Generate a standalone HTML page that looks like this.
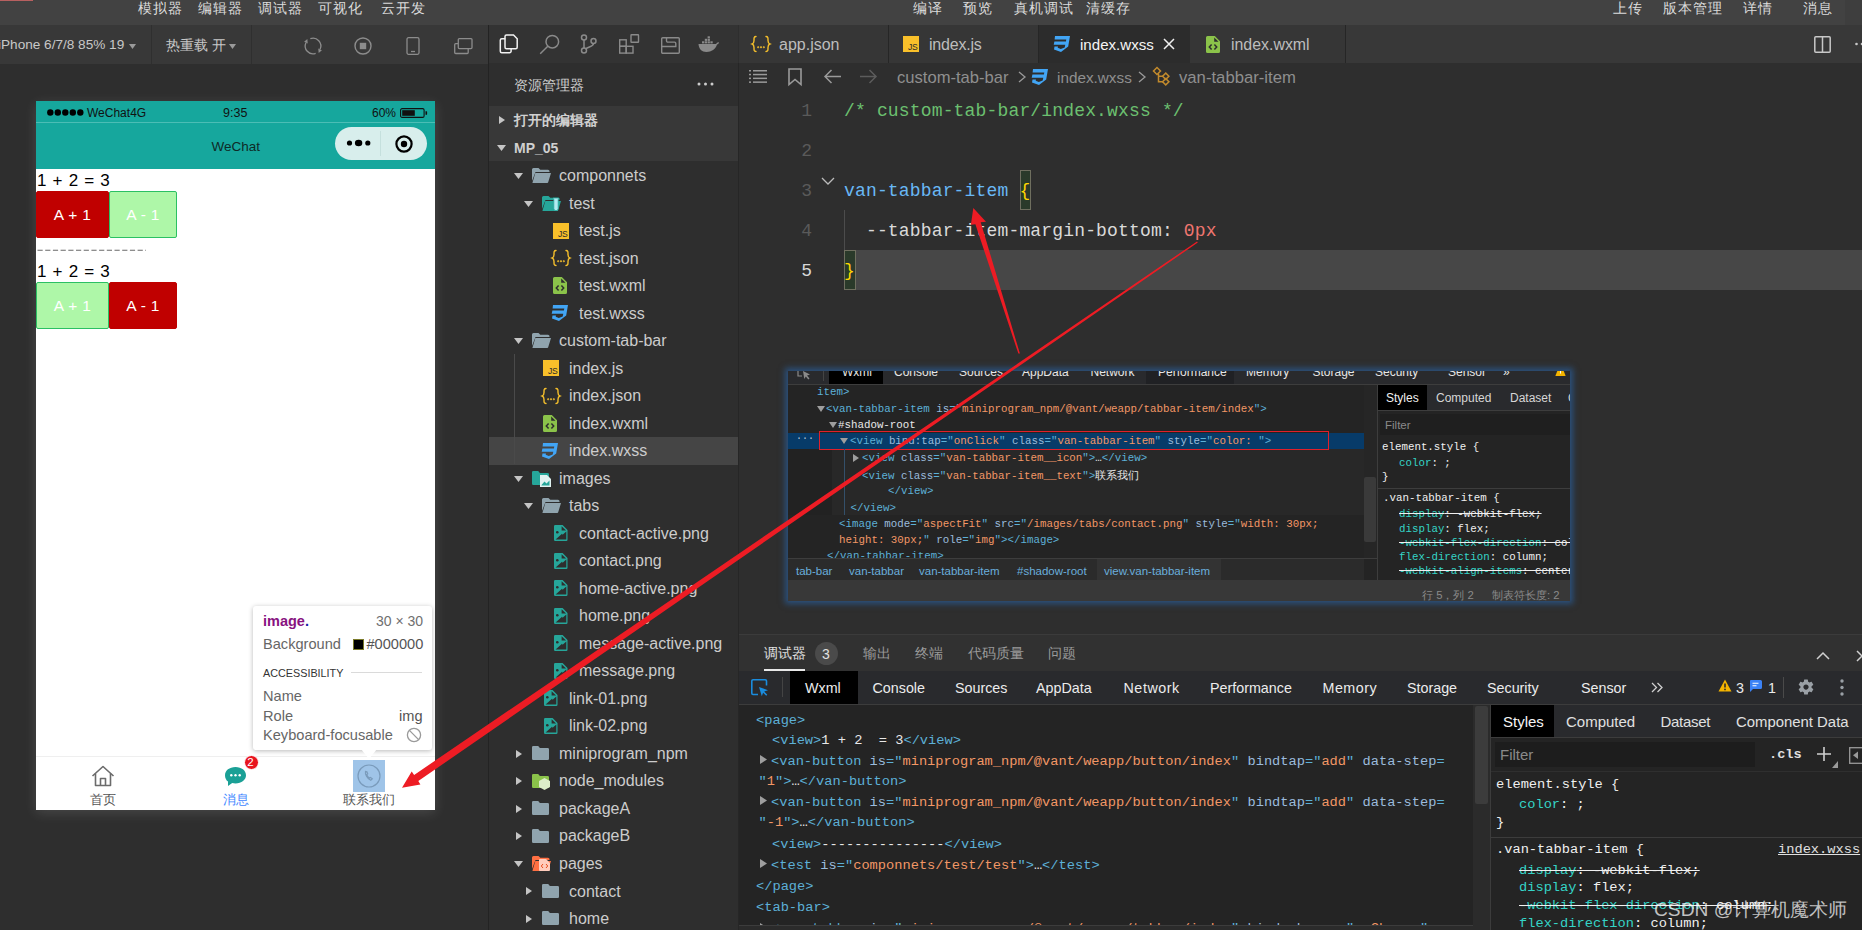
<!DOCTYPE html><html><head><meta charset="utf-8"><title>devtools</title><style>
*{margin:0;padding:0;box-sizing:border-box}
html,body{width:1862px;height:930px;overflow:hidden;background:#2e2e2e;font-family:"Liberation Sans",sans-serif;position:relative}
.a{position:absolute;white-space:nowrap}
svg.a{overflow:visible}
.m{font-family:"Liberation Mono",monospace}
.tg{color:#5db0d7}.an{color:#9bbbdc}.av{color:#f29766}.tx{color:#e8e8e8}.pn{color:#35d4c7}.pv{color:#f0f0f0}
.st{text-decoration:line-through;color:#f0f0f0}
</style></head><body>
<div class="a" style="left:0px;top:0px;width:1862px;height:25px;background:#424242;"></div>
<div class="a" style="left:0px;top:0px;width:33px;height:1px;background:#b86060;"></div>
<div class="a" style="left:1845px;top:0px;width:17px;height:25px;background:#3e3e3e;"></div>
<div class="a" style="left:138px;top:-1.50px;font-size:14px;line-height:18px;color:#dcdcdc;letter-spacing:1px;">模拟器</div>
<div class="a" style="left:198px;top:-1.50px;font-size:14px;line-height:18px;color:#dcdcdc;letter-spacing:1px;">编辑器</div>
<div class="a" style="left:258px;top:-1.50px;font-size:14px;line-height:18px;color:#dcdcdc;letter-spacing:1px;">调试器</div>
<div class="a" style="left:318px;top:-1.50px;font-size:14px;line-height:18px;color:#dcdcdc;letter-spacing:1px;">可视化</div>
<div class="a" style="left:381px;top:-1.50px;font-size:14px;line-height:18px;color:#dcdcdc;letter-spacing:1px;">云开发</div>
<div class="a" style="left:913px;top:-1.50px;font-size:14px;line-height:18px;color:#dcdcdc;letter-spacing:1px;">编译</div>
<div class="a" style="left:963px;top:-1.50px;font-size:14px;line-height:18px;color:#dcdcdc;letter-spacing:1px;">预览</div>
<div class="a" style="left:1014px;top:-1.50px;font-size:14px;line-height:18px;color:#dcdcdc;letter-spacing:1px;">真机调试</div>
<div class="a" style="left:1086px;top:-1.50px;font-size:14px;line-height:18px;color:#dcdcdc;letter-spacing:1px;">清缓存</div>
<div class="a" style="left:1613px;top:-1.50px;font-size:14px;line-height:18px;color:#dcdcdc;letter-spacing:1px;">上传</div>
<div class="a" style="left:1663px;top:-1.50px;font-size:14px;line-height:18px;color:#dcdcdc;letter-spacing:1px;">版本管理</div>
<div class="a" style="left:1743px;top:-1.50px;font-size:14px;line-height:18px;color:#dcdcdc;letter-spacing:1px;">详情</div>
<div class="a" style="left:1803px;top:-1.50px;font-size:14px;line-height:18px;color:#dcdcdc;letter-spacing:1px;">消息</div>
<div class="a" style="left:0px;top:25px;width:488px;height:39px;background:#383838;"></div>
<div class="a" style="left:151px;top:25px;width:1px;height:39px;background:#2f2f2f;"></div>
<div class="a" style="left:251px;top:25px;width:1px;height:39px;background:#2f2f2f;"></div>
<div class="a" style="left:-2px;top:36.00px;font-size:13.6px;line-height:18px;color:#c8c8c8;">iPhone 6/7/8 85% 19</div>
<svg class="a" style="left:129px;top:44px" width="7" height="5"><path d="M0 0H7L3.5 5Z" fill="#9a9a9a"/></svg>
<div class="a" style="left:166px;top:36.00px;font-size:14px;line-height:18px;color:#c8c8c8;">热重载 开</div>
<svg class="a" style="left:229px;top:44px" width="7" height="5"><path d="M0 0H7L3.5 5Z" fill="#9a9a9a"/></svg>
<svg class="a" style="left:304px;top:37px" width="18" height="18" viewBox="0 0 18 18"><path d="M6.33 1.67A7.8 7.8 0 0 1 16.07 12.3M11.67 16.33A7.8 7.8 0 0 1 1.93 5.7" fill="none" stroke="#8c8c8c" stroke-width="1.3"/><path d="M14.25 11.46L17.9 13.14L14.68 15.9Z M0.12 4.85L3.74 6.55L3.33 2.1Z" fill="#8c8c8c"/></svg>
<svg class="a" style="left:354px;top:37px" width="18" height="18" viewBox="0 0 18 18"><circle cx="9" cy="9" r="8" fill="none" stroke="#8c8c8c" stroke-width="1.4"/><rect x="5.8" y="5.8" width="6.4" height="6.4" fill="#8c8c8c"/></svg>
<svg class="a" style="left:406px;top:37px" width="14" height="18" viewBox="0 0 14 18" fill="none" stroke="#8c8c8c" stroke-width="1.3"><rect x="1" y="0.7" width="12" height="16.6" rx="1.5"/><path d="M5 14.5H9"/></svg>
<svg class="a" style="left:454px;top:38px" width="19" height="17" viewBox="0 0 19 17" fill="none" stroke="#8c8c8c" stroke-width="1.3"><rect x="4.3" y="0.6" width="13.7" height="10" rx="1"/><path d="M4.3 5.7H1.7A1 1 0 0 0 .7 6.7V14.5A1 1 0 0 0 1.7 15.5H13.2A1 1 0 0 0 14.2 14.5V10.6"/></svg>
<div class="a" style="left:0px;top:64px;width:488px;height:866px;background:#2e2e2e;"></div>
<div class="a" style="left:488px;top:25px;width:1px;height:905px;background:#232323;"></div>
<div class="a" style="left:36px;top:101px;width:399px;height:709px;background:#fff;box-shadow:0 3px 12px rgba(255,255,255,.13);"></div>
<div class="a" style="left:36px;top:101px;width:399px;height:68px;background:#16a79d;"></div>
<div class="a" style="left:36px;top:122px;width:399px;height:1px;background:#4cbdb5;"></div>
<svg class="a" style="left:47px;top:109px" width="37" height="7" viewBox="0 0 37 7"><circle cx="3.3" cy="3.5" r="3.2"/><circle cx="10.8" cy="3.5" r="3.2"/><circle cx="18.3" cy="3.5" r="3.2"/><circle cx="25.8" cy="3.5" r="3.2"/><circle cx="33.3" cy="3.5" r="3.2"/></svg>
<div class="a" style="left:87px;top:105.50px;font-size:12px;line-height:14px;color:#111;">WeChat4G</div>
<div class="a" style="left:223px;top:106.00px;font-size:12.5px;line-height:14px;color:#111;">9:35</div>
<div class="a" style="left:372px;top:106.00px;font-size:12px;line-height:14px;color:#111;">60%</div>
<svg class="a" style="left:400px;top:108px" width="28" height="10" viewBox="0 0 28 10"><rect x="0.6" y="0.6" width="23.5" height="8.8" rx="1.5" fill="none" stroke="#111" stroke-width="1.1"/><rect x="2.2" y="2.2" width="12.6" height="5.6" fill="#111"/><path d="M25.5 3.2h1a.6 .6 0 0 1 .6.6v2.4a.6 .6 0 0 1-.6.6h-1z" fill="#111"/></svg>
<div class="a" style="left:211.5px;top:139.00px;font-size:13.5px;line-height:16px;color:#0e2b28;">WeChat</div>
<div class="a" style="left:335px;top:127px;width:92px;height:33px;background:#d8eeec;border-radius:17px;"></div>
<div class="a" style="left:380px;top:131px;width:1px;height:25px;background:#c5e0dd;"></div>
<svg class="a" style="left:346px;top:138px" width="26" height="10" viewBox="0 0 26 10"><circle cx="3.5" cy="5" r="2.6" fill="#000"/><ellipse cx="12.6" cy="5" rx="3.7" ry="3.3" fill="#000"/><circle cx="21.8" cy="5" r="2.6" fill="#000"/></svg>
<svg class="a" style="left:394px;top:134px" width="20" height="20" viewBox="0 0 20 20"><circle cx="10" cy="10" r="7.6" fill="none" stroke="#000" stroke-width="2.2"/><circle cx="10" cy="10" r="3.2" fill="#000"/></svg>
<div class="a" style="left:37px;top:171.00px;font-size:17px;line-height:20px;color:#000;letter-spacing:0.2px;word-spacing:1px;">1 + 2 = 3</div>
<div class="a" style="left:36px;top:191px;width:73px;height:47px;background:#c00000;border:1px solid #c00000;border-radius:2px;color:#fff;font-size:15.5px;line-height:45px;text-align:center;letter-spacing:0.3px">A + 1</div>
<div class="a" style="left:109px;top:191px;width:68px;height:47px;background:#aef7a8;border:1px solid #2bc063;border-radius:2px;color:#fff;font-size:15.5px;line-height:45px;text-align:center;letter-spacing:0.3px">A - 1</div>
<svg class="a" style="left:37px;top:249px" width="110" height="3"><path d="M0.5 1.2H109" stroke="#6a6a6a" stroke-width="1.1" stroke-dasharray="5.2 2.5"/></svg>
<div class="a" style="left:37px;top:262.00px;font-size:17px;line-height:20px;color:#000;letter-spacing:0.2px;word-spacing:1px;">1 + 2 = 3</div>
<div class="a" style="left:36px;top:282px;width:73px;height:47px;background:#aef7a8;border:1px solid #2bc063;border-radius:2px;color:#fff;font-size:15.5px;line-height:45px;text-align:center;letter-spacing:0.3px">A + 1</div>
<div class="a" style="left:109px;top:282px;width:68px;height:47px;background:#c00000;border:1px solid #c00000;border-radius:2px;color:#fff;font-size:15.5px;line-height:45px;text-align:center;letter-spacing:0.3px">A - 1</div>
<div class="a" style="left:36px;top:756px;width:399px;height:1px;background:#efefef;"></div>
<svg class="a" style="left:91px;top:765px" width="24" height="22" viewBox="0 0 24 22" fill="none" stroke="#6b6b6b" stroke-width="1.6" stroke-linejoin="round"><path d="M1.5 11L12 1.5L22.5 11"/><path d="M4.5 8.5V20.5H19.5V8.5"/><path d="M9.5 20.5V13.5H14.5V20.5"/></svg>
<div class="a" style="left:89.5px;top:792.50px;font-size:12.5px;line-height:15px;color:#555;">首页</div>
<svg class="a" style="left:224px;top:766px" width="23" height="21" viewBox="0 0 23 21"><path d="M11.5 1C17.6 1 22 4.6 22 9.2S17.6 17.4 11.5 17.4c-1.2 0-2.3-.1-3.3-.4L4 20V15.6C2 14.1 1 11.8 1 9.2 1 4.6 5.4 1 11.5 1Z" fill="#1aa096"/><circle cx="7.3" cy="9.2" r="1.2" fill="#fff"/><circle cx="11.5" cy="9.2" r="1.2" fill="#fff"/><circle cx="15.7" cy="9.2" r="1.2" fill="#fff"/></svg>
<div class="a" style="left:243.5px;top:754.5px;width:15.5px;height:15.5px;background:#e8141e;border-radius:50%;border:1.2px solid #fff;"></div>
<div class="a" style="left:247.3px;top:755.70px;font-size:11.5px;line-height:13px;color:#fff;">2</div>
<div class="a" style="left:222.5px;top:792.50px;font-size:12.5px;line-height:15px;color:#3f87ff;">消息</div>
<div class="a" style="left:353px;top:760px;width:32px;height:32px;background:#9fc4e8;"></div>
<svg class="a" style="left:356px;top:763px" width="26" height="26" viewBox="0 0 26 26" fill="none" stroke="#7a9bbb" stroke-width="1.2"><circle cx="13" cy="13" r="11"/><path d="M9.5 8.5c-.6 2.5 1.6 7.3 5.2 8.8l1.6-1.6-1.8-1.3-1 .7c-1-.6-2.4-2.3-2.7-3.5l.9-.8-.8-2z"/></svg>
<div class="a" style="left:343px;top:792.50px;font-size:12.5px;line-height:15px;color:#555;">联系我们</div>
<div class="a" style="left:253px;top:606px;width:179px;height:144px;background:#fff;border-radius:3px;box-shadow:0 1px 5px rgba(0,0,0,.28);"></div>
<svg class="a" style="left:361px;top:749px" width="16" height="10"><path d="M0 0H16L8 10Z" fill="#fff"/></svg>
<div class="a" style="left:263px;top:612.00px;font-size:14.5px;line-height:18px;color:#881280;font-weight:bold;"><span>image</span><span style="color:#1a1aa6">.</span></div>
<div class="a" style="left:376px;top:612.00px;font-size:14px;line-height:18px;color:#707070;">30 × 30</div>
<div class="a" style="left:263px;top:635.00px;font-size:14.6px;line-height:18px;color:#666;">Background</div>
<div class="a" style="left:353px;top:639px;width:11px;height:11px;background:#000;border:1px solid #7b7b2a;"></div>
<div class="a" style="left:366.5px;top:635.00px;font-size:14.6px;line-height:18px;color:#555;">#000000</div>
<div class="a" style="left:263px;top:665.50px;font-size:10.8px;line-height:14px;color:#333;">ACCESSIBILITY</div>
<div class="a" style="left:351px;top:672px;width:71px;height:1px;background:#dadada;"></div>
<div class="a" style="left:263px;top:687.00px;font-size:14.6px;line-height:18px;color:#666;">Name</div>
<div class="a" style="left:263px;top:706.50px;font-size:14.6px;line-height:18px;color:#666;">Role</div>
<div class="a" style="left:399px;top:706.50px;font-size:14.6px;line-height:18px;color:#555;">img</div>
<div class="a" style="left:263px;top:726.00px;font-size:14.6px;line-height:18px;color:#666;">Keyboard-focusable</div>
<svg class="a" style="left:406px;top:727px" width="16" height="16" viewBox="0 0 16 16" fill="none" stroke="#9a9a9a" stroke-width="1.3"><circle cx="8" cy="8" r="6.6"/><path d="M3.4 3.4L12.6 12.6"/></svg>
<div class="a" style="left:489px;top:25px;width:249px;height:38px;background:#333333;"></div>
<div class="a" style="left:738px;top:63px;width:1px;height:867px;background:#262626;"></div>
<svg class="a" style="left:499px;top:34px" width="20" height="20" viewBox="0 0 20 20" fill="none" stroke="#f2f2f2" stroke-width="1.5"><path d="M6.2 4.8H2.8A1.5 1.5 0 0 0 1.3 6.3V17.2a1.5 1.5 0 0 0 1.5 1.5H10.6a1.5 1.5 0 0 0 1.5-1.5V14.8"/><path d="M7.5 1H14.5L18.2 4.7V13.3A1.5 1.5 0 0 1 16.7 14.8H7.5A1.5 1.5 0 0 1 6 13.3V2.5A1.5 1.5 0 0 1 7.5 1Z"/></svg>
<svg class="a" style="left:539px;top:34px" width="21" height="21" viewBox="0 0 21 21" fill="none" stroke="#8a8a8a" stroke-width="1.5"><circle cx="13.3" cy="7.7" r="6.3"/><path d="M8.8 12.2L1.2 19.8"/></svg>
<svg class="a" style="left:580px;top:34px" width="18" height="20" viewBox="0 0 18 20" fill="none" stroke="#8a8a8a" stroke-width="1.5"><circle cx="4" cy="3.5" r="2.5"/><circle cx="4" cy="16.5" r="2.5"/><circle cx="13.5" cy="7" r="2.5"/><path d="M4 6V14M13.5 9.5C13.5 12.5 9.5 12.5 5.5 14.8"/></svg>
<svg class="a" style="left:619px;top:34px" width="21" height="20" viewBox="0 0 21 20" fill="none" stroke="#8a8a8a" stroke-width="1.4"><rect x="0.7" y="5.8" width="6.5" height="6.5"/><rect x="0.7" y="12.3" width="6.5" height="6.8"/><rect x="7.2" y="12.3" width="6.8" height="6.8"/><rect x="12" y="0.7" width="7.5" height="7.5" rx="0.5"/></svg>
<svg class="a" style="left:661px;top:37px" width="19" height="17" viewBox="0 0 19 17" fill="none" stroke="#8a8a8a" stroke-width="1.4"><rect x="0.7" y="0.7" width="17.6" height="15.6" rx="1"/><path d="M5.5 0.7V3.8A1.3 1.3 0 0 0 6.8 5.1H13.5A1.3 1.3 0 0 1 14.8 6.4V9.5H0.7"/></svg>
<svg class="a" style="left:698px;top:37px" width="22" height="15" viewBox="0 0 22 15"><path d="M0.5 7H18.2C18.5 6 19.5 5.2 21 5.4C20.6 6.6 20 7.2 19 7.6C17.5 12.5 13.5 15 8.5 15C3.8 15 0.8 12 0.5 7Z" fill="#8a8a8a"/><rect x="4" y="4.3" width="2.3" height="2.1" fill="#8a8a8a"/><rect x="6.8" y="4.3" width="2.3" height="2.1" fill="#8a8a8a"/><rect x="9.6" y="4.3" width="2.3" height="2.1" fill="#8a8a8a"/><rect x="12.4" y="4.3" width="2.3" height="2.1" fill="#8a8a8a"/><rect x="6.8" y="1.8" width="2.3" height="2.1" fill="#8a8a8a"/><rect x="9.6" y="1.8" width="2.3" height="2.1" fill="#8a8a8a"/><rect x="9.6" y="-0.7" width="2.3" height="2.1" fill="#8a8a8a"/></svg>
<div class="a" style="left:514px;top:75.50px;font-size:14px;line-height:18px;color:#cfcfcf;">资源管理器</div>
<svg class="a" style="left:697px;top:82px" width="17" height="4"><circle cx="2" cy="2" r="1.5" fill="#ccc"/><circle cx="8.5" cy="2" r="1.5" fill="#ccc"/><circle cx="15" cy="2" r="1.5" fill="#ccc"/></svg>
<div class="a" style="left:489px;top:106px;width:249px;height:55px;background:#383838;"></div>
<svg class="a" style="left:499px;top:116.0px" width="6" height="8"><path d="M0 0L6 4L0 8Z" fill="#c5c5c5"/></svg>
<div class="a" style="left:514px;top:111.00px;font-size:14px;line-height:18px;color:#d0d0d0;font-weight:bold;">打开的编辑器</div>
<svg class="a" style="left:497px;top:144.5px" width="9" height="6"><path d="M0 0H9L4.5 6Z" fill="#c5c5c5"/></svg>
<div class="a" style="left:514px;top:138.50px;font-size:14px;line-height:18px;color:#d0d0d0;font-weight:bold;">MP_05</div>
<div class="a" style="left:489px;top:437px;width:249px;height:27.5px;background:#454545;"></div>
<div class="a" style="left:514px;top:354px;width:1px;height:110px;background:#4a4a4a;"></div>
<svg class="a" style="left:514px;top:173.0px" width="9" height="6"><path d="M0 0H9L4.5 6Z" fill="#c5c5c5"/></svg>
<svg class="a" style="left:532px;top:168.0px" width="19" height="15" viewBox="0 0 19 15"><path d="M0 1.5A1.5 1.5 0 0 1 1.5 0H6.5L8.3 1.8H16A1.5 1.5 0 0 1 17.5 3.3V4H3.5L0 13Z" fill="#90a4ae"/><path d="M3.3 5H19L16.2 14.2A1 1 0 0 1 15.2 15H0.4Z" fill="#90a4ae"/></svg>
<div class="a" style="left:559px;top:166.31px;font-size:16px;line-height:20px;color:#cccccc;">componnets</div>
<svg class="a" style="left:524px;top:200.5px" width="9" height="6"><path d="M0 0H9L4.5 6Z" fill="#c5c5c5"/></svg>
<svg class="a" style="left:542px;top:195.5px" width="19" height="15" viewBox="0 0 19 15"><path d="M0 1.5A1.5 1.5 0 0 1 1.5 0H6.5L8.3 1.8H16A1.5 1.5 0 0 1 17.5 3.3V4H3.5L0 13Z" fill="#26a69a"/><path d="M3.3 5H19L16.2 14.2A1 1 0 0 1 15.2 15H0.4Z" fill="#26a69a"/></svg>
<svg class="a" style="left:552px;top:198.0px" width="8" height="13"><path d="M1 0H7V1.2H6.2V10.5A2.2 2.2 0 0 1 1.8 10.5V1.2H1Z" fill="#b2ebf2" stroke="#26a69a" stroke-width=".8"/></svg>
<div class="a" style="left:569px;top:193.82px;font-size:16px;line-height:20px;color:#cccccc;">test</div>
<svg class="a" style="left:553px;top:222.5px" width="16" height="16" viewBox="0 0 16 16"><rect x="0" y="0" width="16" height="16" fill="#f9c02a"/><text x="14.6" y="14.3" text-anchor="end" font-family="Liberation Sans" font-size="8.6" fill="#2b2b2b" letter-spacing="-.2">JS</text></svg>
<div class="a" style="left:579px;top:221.33px;font-size:16px;line-height:20px;color:#cccccc;">test.js</div>
<svg class="a" style="left:551px;top:249.03499999999997px" width="20" height="18" viewBox="0 0 20 18" fill="none" stroke="#f6c02c" stroke-width="1.4" stroke-linecap="round"><path d="M5 1.5C2.8 1.5 3 3 3 5.5S2.6 8.5 1.2 9C2.6 9.5 3 10 3 12.5S2.8 16.5 5 16.5"/><path d="M15 1.5C17.2 1.5 17 3 17 5.5S17.4 8.5 18.8 9C17.4 9.5 17 10 17 12.5S17.2 16.5 15 16.5"/><circle cx="7.2" cy="12.3" r=".35" fill="#f6c02c"/><circle cx="10" cy="12.3" r=".35" fill="#f6c02c"/><circle cx="12.8" cy="12.3" r=".35" fill="#f6c02c"/></svg>
<div class="a" style="left:579px;top:248.83px;font-size:16px;line-height:20px;color:#cccccc;">test.json</div>
<svg class="a" style="left:553px;top:277.2px" width="14" height="17" viewBox="0 0 14 17"><path d="M1.5 0H8.8L14 5.3V15.5A1.5 1.5 0 0 1 12.5 17H1.5A1.5 1.5 0 0 1 0 15.5V1.5A1.5 1.5 0 0 1 1.5 0Z" fill="#8bc34a"/><path d="M8.2 1.5V5.8H12.5Z" fill="#2e2e2e"/><path d="M5.6 8.6L3.3 11.1L5.6 13.6M8.4 8.6L10.7 11.1L8.4 13.6" fill="none" stroke="#2e2e2e" stroke-width="1.5"/></svg>
<div class="a" style="left:579px;top:276.34px;font-size:16px;line-height:20px;color:#cccccc;">test.wxml</div>
<svg class="a" style="left:551px;top:305.0px" width="17" height="16" viewBox="0 0 17 16"><path d="M2 0H17L15.2 10.6L8 16L1 13.6L1.5 10.5H5L4.7 11.8L7.8 12.9L11.7 11.6L12.3 8.8H0.7L1.4 5.6H12.9L13.3 3.5H1.6Z" fill="#42a5f5"/></svg>
<div class="a" style="left:579px;top:303.85px;font-size:16px;line-height:20px;color:#cccccc;">test.wxss</div>
<svg class="a" style="left:514px;top:338.1px" width="9" height="6"><path d="M0 0H9L4.5 6Z" fill="#c5c5c5"/></svg>
<svg class="a" style="left:532px;top:333.1px" width="19" height="15" viewBox="0 0 19 15"><path d="M0 1.5A1.5 1.5 0 0 1 1.5 0H6.5L8.3 1.8H16A1.5 1.5 0 0 1 17.5 3.3V4H3.5L0 13Z" fill="#90a4ae"/><path d="M3.3 5H19L16.2 14.2A1 1 0 0 1 15.2 15H0.4Z" fill="#90a4ae"/></svg>
<div class="a" style="left:559px;top:331.36px;font-size:16px;line-height:20px;color:#cccccc;">custom-tab-bar</div>
<svg class="a" style="left:543px;top:360.1px" width="16" height="16" viewBox="0 0 16 16"><rect x="0" y="0" width="16" height="16" fill="#f9c02a"/><text x="14.6" y="14.3" text-anchor="end" font-family="Liberation Sans" font-size="8.6" fill="#2b2b2b" letter-spacing="-.2">JS</text></svg>
<div class="a" style="left:569px;top:358.86px;font-size:16px;line-height:20px;color:#cccccc;">index.js</div>
<svg class="a" style="left:541px;top:386.57px" width="20" height="18" viewBox="0 0 20 18" fill="none" stroke="#f6c02c" stroke-width="1.4" stroke-linecap="round"><path d="M5 1.5C2.8 1.5 3 3 3 5.5S2.6 8.5 1.2 9C2.6 9.5 3 10 3 12.5S2.8 16.5 5 16.5"/><path d="M15 1.5C17.2 1.5 17 3 17 5.5S17.4 8.5 18.8 9C17.4 9.5 17 10 17 12.5S17.2 16.5 15 16.5"/><circle cx="7.2" cy="12.3" r=".35" fill="#f6c02c"/><circle cx="10" cy="12.3" r=".35" fill="#f6c02c"/><circle cx="12.8" cy="12.3" r=".35" fill="#f6c02c"/></svg>
<div class="a" style="left:569px;top:386.37px;font-size:16px;line-height:20px;color:#cccccc;">index.json</div>
<svg class="a" style="left:543px;top:414.8px" width="14" height="17" viewBox="0 0 14 17"><path d="M1.5 0H8.8L14 5.3V15.5A1.5 1.5 0 0 1 12.5 17H1.5A1.5 1.5 0 0 1 0 15.5V1.5A1.5 1.5 0 0 1 1.5 0Z" fill="#8bc34a"/><path d="M8.2 1.5V5.8H12.5Z" fill="#2e2e2e"/><path d="M5.6 8.6L3.3 11.1L5.6 13.6M8.4 8.6L10.7 11.1L8.4 13.6" fill="none" stroke="#2e2e2e" stroke-width="1.5"/></svg>
<div class="a" style="left:569px;top:413.88px;font-size:16px;line-height:20px;color:#cccccc;">index.wxml</div>
<svg class="a" style="left:541px;top:442.6px" width="17" height="16" viewBox="0 0 17 16"><path d="M2 0H17L15.2 10.6L8 16L1 13.6L1.5 10.5H5L4.7 11.8L7.8 12.9L11.7 11.6L12.3 8.8H0.7L1.4 5.6H12.9L13.3 3.5H1.6Z" fill="#42a5f5"/></svg>
<div class="a" style="left:569px;top:441.38px;font-size:16px;line-height:20px;color:#cccccc;">index.wxss</div>
<svg class="a" style="left:514px;top:475.6px" width="9" height="6"><path d="M0 0H9L4.5 6Z" fill="#c5c5c5"/></svg>
<svg class="a" style="left:532px;top:471.1px" width="17" height="14" viewBox="0 0 17 14"><path d="M0 1.3A1.3 1.3 0 0 1 1.3 0H6.2L7.9 1.9H15.7A1.3 1.3 0 0 1 17 3.2V12.7A1.3 1.3 0 0 1 15.7 14H1.3A1.3 1.3 0 0 1 0 12.7Z" fill="#26a69a"/></svg>
<svg class="a" style="left:540px;top:475.1px" width="11" height="12"><path d="M0 0H7L11 4V12H0Z" fill="#e0f2f1"/><path d="M1.5 10L4.5 6.5L6.5 8.5L9.5 5.5V10.5H1.5Z" fill="#26a69a"/></svg>
<div class="a" style="left:559px;top:468.89px;font-size:16px;line-height:20px;color:#cccccc;">images</div>
<svg class="a" style="left:524px;top:503.1px" width="9" height="6"><path d="M0 0H9L4.5 6Z" fill="#c5c5c5"/></svg>
<svg class="a" style="left:542px;top:498.1px" width="19" height="15" viewBox="0 0 19 15"><path d="M0 1.5A1.5 1.5 0 0 1 1.5 0H6.5L8.3 1.8H16A1.5 1.5 0 0 1 17.5 3.3V4H3.5L0 13Z" fill="#90a4ae"/><path d="M3.3 5H19L16.2 14.2A1 1 0 0 1 15.2 15H0.4Z" fill="#90a4ae"/></svg>
<div class="a" style="left:569px;top:496.40px;font-size:16px;line-height:20px;color:#cccccc;">tabs</div>
<svg class="a" style="left:554px;top:525.1px" width="14" height="16" viewBox="0 0 14 16"><path d="M1.2 0H8.6L13.5 5V14.8A1.2 1.2 0 0 1 12.3 16H1.2A1.2 1.2 0 0 1 0 14.8V1.2A1.2 1.2 0 0 1 1.2 0Z" fill="#26a69a"/><path d="M7.6 1.2V5.6H12.1Z" fill="#2e2e2e"/><circle cx="3.3" cy="7.3" r="1.3" fill="#2e2e2e"/><path d="M1.6 14.6L8 8.8L8.6 9.8L12.3 6.6V14.6Z" fill="#2e2e2e"/></svg>
<div class="a" style="left:579px;top:523.90px;font-size:16px;line-height:20px;color:#cccccc;">contact-active.png</div>
<svg class="a" style="left:554px;top:552.6px" width="14" height="16" viewBox="0 0 14 16"><path d="M1.2 0H8.6L13.5 5V14.8A1.2 1.2 0 0 1 12.3 16H1.2A1.2 1.2 0 0 1 0 14.8V1.2A1.2 1.2 0 0 1 1.2 0Z" fill="#26a69a"/><path d="M7.6 1.2V5.6H12.1Z" fill="#2e2e2e"/><circle cx="3.3" cy="7.3" r="1.3" fill="#2e2e2e"/><path d="M1.6 14.6L8 8.8L8.6 9.8L12.3 6.6V14.6Z" fill="#2e2e2e"/></svg>
<div class="a" style="left:579px;top:551.41px;font-size:16px;line-height:20px;color:#cccccc;">contact.png</div>
<svg class="a" style="left:554px;top:580.1px" width="14" height="16" viewBox="0 0 14 16"><path d="M1.2 0H8.6L13.5 5V14.8A1.2 1.2 0 0 1 12.3 16H1.2A1.2 1.2 0 0 1 0 14.8V1.2A1.2 1.2 0 0 1 1.2 0Z" fill="#26a69a"/><path d="M7.6 1.2V5.6H12.1Z" fill="#2e2e2e"/><circle cx="3.3" cy="7.3" r="1.3" fill="#2e2e2e"/><path d="M1.6 14.6L8 8.8L8.6 9.8L12.3 6.6V14.6Z" fill="#2e2e2e"/></svg>
<div class="a" style="left:579px;top:578.92px;font-size:16px;line-height:20px;color:#cccccc;">home-active.png</div>
<svg class="a" style="left:554px;top:607.6px" width="14" height="16" viewBox="0 0 14 16"><path d="M1.2 0H8.6L13.5 5V14.8A1.2 1.2 0 0 1 12.3 16H1.2A1.2 1.2 0 0 1 0 14.8V1.2A1.2 1.2 0 0 1 1.2 0Z" fill="#26a69a"/><path d="M7.6 1.2V5.6H12.1Z" fill="#2e2e2e"/><circle cx="3.3" cy="7.3" r="1.3" fill="#2e2e2e"/><path d="M1.6 14.6L8 8.8L8.6 9.8L12.3 6.6V14.6Z" fill="#2e2e2e"/></svg>
<div class="a" style="left:579px;top:606.43px;font-size:16px;line-height:20px;color:#cccccc;">home.png</div>
<svg class="a" style="left:554px;top:635.1px" width="14" height="16" viewBox="0 0 14 16"><path d="M1.2 0H8.6L13.5 5V14.8A1.2 1.2 0 0 1 12.3 16H1.2A1.2 1.2 0 0 1 0 14.8V1.2A1.2 1.2 0 0 1 1.2 0Z" fill="#26a69a"/><path d="M7.6 1.2V5.6H12.1Z" fill="#2e2e2e"/><circle cx="3.3" cy="7.3" r="1.3" fill="#2e2e2e"/><path d="M1.6 14.6L8 8.8L8.6 9.8L12.3 6.6V14.6Z" fill="#2e2e2e"/></svg>
<div class="a" style="left:579px;top:633.93px;font-size:16px;line-height:20px;color:#cccccc;">message-active.png</div>
<svg class="a" style="left:554px;top:662.6px" width="14" height="16" viewBox="0 0 14 16"><path d="M1.2 0H8.6L13.5 5V14.8A1.2 1.2 0 0 1 12.3 16H1.2A1.2 1.2 0 0 1 0 14.8V1.2A1.2 1.2 0 0 1 1.2 0Z" fill="#26a69a"/><path d="M7.6 1.2V5.6H12.1Z" fill="#2e2e2e"/><circle cx="3.3" cy="7.3" r="1.3" fill="#2e2e2e"/><path d="M1.6 14.6L8 8.8L8.6 9.8L12.3 6.6V14.6Z" fill="#2e2e2e"/></svg>
<div class="a" style="left:579px;top:661.44px;font-size:16px;line-height:20px;color:#cccccc;">message.png</div>
<svg class="a" style="left:544px;top:690.1px" width="14" height="16" viewBox="0 0 14 16"><path d="M1.2 0H8.6L13.5 5V14.8A1.2 1.2 0 0 1 12.3 16H1.2A1.2 1.2 0 0 1 0 14.8V1.2A1.2 1.2 0 0 1 1.2 0Z" fill="#26a69a"/><path d="M7.6 1.2V5.6H12.1Z" fill="#2e2e2e"/><circle cx="3.3" cy="7.3" r="1.3" fill="#2e2e2e"/><path d="M1.6 14.6L8 8.8L8.6 9.8L12.3 6.6V14.6Z" fill="#2e2e2e"/></svg>
<div class="a" style="left:569px;top:688.95px;font-size:16px;line-height:20px;color:#cccccc;">link-01.png</div>
<svg class="a" style="left:544px;top:717.7px" width="14" height="16" viewBox="0 0 14 16"><path d="M1.2 0H8.6L13.5 5V14.8A1.2 1.2 0 0 1 12.3 16H1.2A1.2 1.2 0 0 1 0 14.8V1.2A1.2 1.2 0 0 1 1.2 0Z" fill="#26a69a"/><path d="M7.6 1.2V5.6H12.1Z" fill="#2e2e2e"/><circle cx="3.3" cy="7.3" r="1.3" fill="#2e2e2e"/><path d="M1.6 14.6L8 8.8L8.6 9.8L12.3 6.6V14.6Z" fill="#2e2e2e"/></svg>
<div class="a" style="left:569px;top:716.45px;font-size:16px;line-height:20px;color:#cccccc;">link-02.png</div>
<svg class="a" style="left:516px;top:749.7px" width="6" height="8"><path d="M0 0L6 4L0 8Z" fill="#c5c5c5"/></svg>
<svg class="a" style="left:532px;top:746.2px" width="17" height="14" viewBox="0 0 17 14"><path d="M0 1.3A1.3 1.3 0 0 1 1.3 0H6.2L7.9 1.9H15.7A1.3 1.3 0 0 1 17 3.2V12.7A1.3 1.3 0 0 1 15.7 14H1.3A1.3 1.3 0 0 1 0 12.7Z" fill="#90a4ae"/></svg>
<div class="a" style="left:559px;top:743.96px;font-size:16px;line-height:20px;color:#cccccc;">miniprogram_npm</div>
<svg class="a" style="left:516px;top:777.2px" width="6" height="8"><path d="M0 0L6 4L0 8Z" fill="#c5c5c5"/></svg>
<svg class="a" style="left:532px;top:773.7px" width="17" height="14" viewBox="0 0 17 14"><path d="M0 1.3A1.3 1.3 0 0 1 1.3 0H6.2L7.9 1.9H15.7A1.3 1.3 0 0 1 17 3.2V12.7A1.3 1.3 0 0 1 15.7 14H1.3A1.3 1.3 0 0 1 0 12.7Z" fill="#8bc34a"/></svg>
<svg class="a" style="left:539px;top:777.7px" width="11" height="12"><path d="M5.5 0L11 3V9L5.5 12L0 9V3Z" fill="#dcedc8"/></svg>
<div class="a" style="left:559px;top:771.47px;font-size:16px;line-height:20px;color:#cccccc;">node_modules</div>
<svg class="a" style="left:516px;top:804.7px" width="6" height="8"><path d="M0 0L6 4L0 8Z" fill="#c5c5c5"/></svg>
<svg class="a" style="left:532px;top:801.2px" width="17" height="14" viewBox="0 0 17 14"><path d="M0 1.3A1.3 1.3 0 0 1 1.3 0H6.2L7.9 1.9H15.7A1.3 1.3 0 0 1 17 3.2V12.7A1.3 1.3 0 0 1 15.7 14H1.3A1.3 1.3 0 0 1 0 12.7Z" fill="#90a4ae"/></svg>
<div class="a" style="left:559px;top:798.98px;font-size:16px;line-height:20px;color:#cccccc;">packageA</div>
<svg class="a" style="left:516px;top:832.2px" width="6" height="8"><path d="M0 0L6 4L0 8Z" fill="#c5c5c5"/></svg>
<svg class="a" style="left:532px;top:828.7px" width="17" height="14" viewBox="0 0 17 14"><path d="M0 1.3A1.3 1.3 0 0 1 1.3 0H6.2L7.9 1.9H15.7A1.3 1.3 0 0 1 17 3.2V12.7A1.3 1.3 0 0 1 15.7 14H1.3A1.3 1.3 0 0 1 0 12.7Z" fill="#90a4ae"/></svg>
<div class="a" style="left:559px;top:826.48px;font-size:16px;line-height:20px;color:#cccccc;">packageB</div>
<svg class="a" style="left:514px;top:860.7px" width="9" height="6"><path d="M0 0H9L4.5 6Z" fill="#c5c5c5"/></svg>
<svg class="a" style="left:532px;top:855.7px" width="19" height="15" viewBox="0 0 19 15"><path d="M0 1.5A1.5 1.5 0 0 1 1.5 0H6.5L8.3 1.8H16A1.5 1.5 0 0 1 17.5 3.3V4H3.5L0 13Z" fill="#ff7043"/><path d="M3.3 5H19L16.2 14.2A1 1 0 0 1 15.2 15H0.4Z" fill="#ff7043"/></svg>
<svg class="a" style="left:539px;top:859.2px" width="11" height="12"><path d="M0 1A1 1 0 0 1 1 0H7L11 4V11A1 1 0 0 1 10 12H1A1 1 0 0 1 0 11Z" fill="#ffccbc"/><path d="M4 5L2.3 7L4 9M7 5L8.7 7L7 9" fill="none" stroke="#e64a19" stroke-width="1"/></svg>
<div class="a" style="left:559px;top:853.99px;font-size:16px;line-height:20px;color:#cccccc;">pages</div>
<svg class="a" style="left:526px;top:887.2px" width="6" height="8"><path d="M0 0L6 4L0 8Z" fill="#c5c5c5"/></svg>
<svg class="a" style="left:542px;top:883.7px" width="17" height="14" viewBox="0 0 17 14"><path d="M0 1.3A1.3 1.3 0 0 1 1.3 0H6.2L7.9 1.9H15.7A1.3 1.3 0 0 1 17 3.2V12.7A1.3 1.3 0 0 1 15.7 14H1.3A1.3 1.3 0 0 1 0 12.7Z" fill="#90a4ae"/></svg>
<div class="a" style="left:569px;top:881.50px;font-size:16px;line-height:20px;color:#cccccc;">contact</div>
<svg class="a" style="left:526px;top:914.7px" width="6" height="8"><path d="M0 0L6 4L0 8Z" fill="#c5c5c5"/></svg>
<svg class="a" style="left:542px;top:911.2px" width="17" height="14" viewBox="0 0 17 14"><path d="M0 1.3A1.3 1.3 0 0 1 1.3 0H6.2L7.9 1.9H15.7A1.3 1.3 0 0 1 17 3.2V12.7A1.3 1.3 0 0 1 15.7 14H1.3A1.3 1.3 0 0 1 0 12.7Z" fill="#90a4ae"/></svg>
<div class="a" style="left:569px;top:909.00px;font-size:16px;line-height:20px;color:#cccccc;">home</div>
<div class="a" style="left:739px;top:25px;width:1123px;height:38px;background:#383838;"></div>
<div class="a" style="left:739px;top:25px;width:149px;height:38px;background:#363636;"></div>
<div class="a" style="left:888px;top:25px;width:1px;height:38px;background:#262626;"></div>
<div class="a" style="left:889px;top:25px;width:149px;height:38px;background:#363636;"></div>
<div class="a" style="left:1038px;top:25px;width:1px;height:38px;background:#262626;"></div>
<div class="a" style="left:1039px;top:25px;width:151px;height:38px;background:#2c2c2c;"></div>
<div class="a" style="left:1190px;top:25px;width:155px;height:38px;background:#363636;"></div>
<div class="a" style="left:1345px;top:25px;width:1px;height:38px;background:#262626;"></div>
<svg class="a" style="left:751px;top:35px" width="20" height="18" viewBox="0 0 20 18" fill="none" stroke="#f6c02c" stroke-width="1.4" stroke-linecap="round"><path d="M5 1.5C2.8 1.5 3 3 3 5.5S2.6 8.5 1.2 9C2.6 9.5 3 10 3 12.5S2.8 16.5 5 16.5"/><path d="M15 1.5C17.2 1.5 17 3 17 5.5S17.4 8.5 18.8 9C17.4 9.5 17 10 17 12.5S17.2 16.5 15 16.5"/><circle cx="7.2" cy="12.3" r=".35" fill="#f6c02c"/><circle cx="10" cy="12.3" r=".35" fill="#f6c02c"/><circle cx="12.8" cy="12.3" r=".35" fill="#f6c02c"/></svg>
<div class="a" style="left:779px;top:34.50px;font-size:16px;line-height:20px;color:#bdbdbd;">app.json</div>
<svg class="a" style="left:903px;top:36.0px" width="16" height="16" viewBox="0 0 16 16"><rect x="0" y="0" width="16" height="16" fill="#f9c02a"/><text x="14.6" y="14.3" text-anchor="end" font-family="Liberation Sans" font-size="8.6" fill="#2b2b2b" letter-spacing="-.2">JS</text></svg>
<div class="a" style="left:929px;top:34.50px;font-size:16px;line-height:20px;color:#bdbdbd;letter-spacing:-0.2px">index.js</div>
<svg class="a" style="left:1053px;top:36.0px" width="17" height="16" viewBox="0 0 17 16"><path d="M2 0H17L15.2 10.6L8 16L1 13.6L1.5 10.5H5L4.7 11.8L7.8 12.9L11.7 11.6L12.3 8.8H0.7L1.4 5.6H12.9L13.3 3.5H1.6Z" fill="#42a5f5"/></svg>
<div class="a" style="left:1080px;top:34.50px;font-size:15.1px;line-height:20px;color:#f5f5f5;">index.wxss</div>
<svg class="a" style="left:1163px;top:38px" width="12" height="12"><path d="M1 1L11 11M11 1L1 11" stroke="#f0f0f0" stroke-width="1.5"/></svg>
<svg class="a" style="left:1206px;top:35.7px" width="14" height="17" viewBox="0 0 14 17"><path d="M1.5 0H8.8L14 5.3V15.5A1.5 1.5 0 0 1 12.5 17H1.5A1.5 1.5 0 0 1 0 15.5V1.5A1.5 1.5 0 0 1 1.5 0Z" fill="#8bc34a"/><path d="M8.2 1.5V5.8H12.5Z" fill="#2e2e2e"/><path d="M5.6 8.6L3.3 11.1L5.6 13.6M8.4 8.6L10.7 11.1L8.4 13.6" fill="none" stroke="#2e2e2e" stroke-width="1.5"/></svg>
<div class="a" style="left:1231px;top:34.50px;font-size:15.9px;line-height:20px;color:#bdbdbd;">index.wxml</div>
<svg class="a" style="left:1814px;top:36px" width="17" height="17" viewBox="0 0 17 17" fill="none" stroke="#c8c8c8" stroke-width="1.5"><rect x=".8" y=".8" width="15.4" height="15.4" rx="1"/><path d="M8.5 .8V16.2"/></svg>
<svg class="a" style="left:1855px;top:42px" width="10" height="4"><circle cx="1.5" cy="2" r="1.3" fill="#c8c8c8"/><circle cx="7" cy="2" r="1.3" fill="#c8c8c8"/></svg>
<div class="a" style="left:739px;top:63px;width:1123px;height:571px;background:#2e2e2e;"></div>
<svg class="a" style="left:749px;top:70px" width="18" height="13" viewBox="0 0 18 13" fill="#9a9a9a"><rect x="0" y="0" width="2" height="1.5"/><rect x="4" y="0" width="14" height="1.5"/><rect x="0" y="3.8" width="2" height="1.5"/><rect x="4" y="3.8" width="14" height="1.5"/><rect x="0" y="7.6" width="2" height="1.5"/><rect x="4" y="7.6" width="14" height="1.5"/><rect x="0" y="11.4" width="2" height="1.5"/><rect x="4" y="11.4" width="14" height="1.5"/></svg>
<svg class="a" style="left:788px;top:68px" width="14" height="18" viewBox="0 0 14 18" fill="none" stroke="#9a9a9a" stroke-width="1.6"><path d="M1 1H13V16.5L7 11.5L1 16.5Z"/></svg>
<svg class="a" style="left:824px;top:69px" width="17" height="15" viewBox="0 0 17 15" fill="none" stroke="#9a9a9a" stroke-width="1.5"><path d="M17 7.5H1.5M7.5 1L1 7.5L7.5 14"/></svg>
<svg class="a" style="left:860px;top:69px" width="17" height="15" viewBox="0 0 17 15" fill="none" stroke="#5c5c5c" stroke-width="1.5"><path d="M0 7.5H15.5M9.5 1L16 7.5L9.5 14"/></svg>
<div class="a" style="left:897px;top:68.00px;font-size:16.6px;line-height:20px;color:#8f8f8f;">custom-tab-bar</div>
<svg class="a" style="left:1018px;top:71px" width="8" height="12"><path d="M1 1L7 6L1 11" fill="none" stroke="#9a9a9a" stroke-width="1.3"/></svg>
<svg class="a" style="left:1031px;top:69.0px" width="17" height="16" viewBox="0 0 17 16"><path d="M2 0H17L15.2 10.6L8 16L1 13.6L1.5 10.5H5L4.7 11.8L7.8 12.9L11.7 11.6L12.3 8.8H0.7L1.4 5.6H12.9L13.3 3.5H1.6Z" fill="#42a5f5"/></svg>
<div class="a" style="left:1057px;top:68.00px;font-size:15.3px;line-height:20px;color:#8f8f8f;">index.wxss</div>
<svg class="a" style="left:1138px;top:71px" width="8" height="12"><path d="M1 1L7 6L1 11" fill="none" stroke="#9a9a9a" stroke-width="1.3"/></svg>
<svg class="a" style="left:1153px;top:67px" width="18" height="18" viewBox="0 0 18 18" fill="none" stroke="#c28a2c" stroke-width="1.5"><rect x="1.5" y="1.5" width="5" height="5" transform="rotate(45 4 4) translate(0 0)"/><rect x="10.5" y="7" width="4.5" height="4.5" transform="rotate(45 12.75 9.25)"/><rect x="10.5" y="12.5" width="4.5" height="4.5" transform="rotate(45 12.75 14.75)"/><path d="M5.5 6.5V14.7H10M5.5 9.3H10"/></svg>
<div class="a" style="left:1179px;top:68.00px;font-size:16.7px;line-height:20px;color:#8f8f8f;">van-tabbar-item</div>
<div class="a" style="left:844px;top:250px;width:1018px;height:40px;background:#474747;"></div>
<div class="a" style="left:800px;top:99.50px;font-size:18px;line-height:22px;color:#5a5a5a;font-family:'Liberation Mono',monospace;width:12px;text-align:right;">1</div>
<div class="a" style="left:800px;top:139.50px;font-size:18px;line-height:22px;color:#5a5a5a;font-family:'Liberation Mono',monospace;width:12px;text-align:right;">2</div>
<div class="a" style="left:800px;top:179.50px;font-size:18px;line-height:22px;color:#5a5a5a;font-family:'Liberation Mono',monospace;width:12px;text-align:right;">3</div>
<div class="a" style="left:800px;top:219.50px;font-size:18px;line-height:22px;color:#5a5a5a;font-family:'Liberation Mono',monospace;width:12px;text-align:right;">4</div>
<div class="a" style="left:800px;top:259.50px;font-size:18px;line-height:22px;color:#d8d8d8;font-family:'Liberation Mono',monospace;width:12px;text-align:right;">5</div>
<div class="a" style="left:1020px;top:170px;width:11px;height:40px;background:#2a3a2a;border:1px solid #6f6f5f;"></div>
<div class="a" style="left:844px;top:250px;width:12px;height:40px;background:#2a3a2a;border:1px solid #6f6f5f;"></div>
<div class="a" style="left:844px;top:210px;width:1px;height:40px;background:#4c4c4c;"></div>
<svg class="a" style="left:821px;top:177px" width="14" height="8"><path d="M1 1L7 7L13 1" fill="none" stroke="#bbb" stroke-width="1.3"/></svg>
<div class="a" style="left:844px;top:99.50px;font-size:18px;line-height:22px;color:#6cc070;font-family:'Liberation Mono',monospace;letter-spacing:0.16px;">/* custom-tab-bar/index.wxss */</div>
<div class="a" style="left:844px;top:179.50px;font-size:18px;line-height:22px;color:#ddd;font-family:'Liberation Mono',monospace;letter-spacing:0.16px;"><span style="color:#69b8f5">van-tabbar-item</span> <span style="color:#ffd700">{</span></div>
<div class="a" style="left:844px;top:219.50px;font-size:18px;line-height:22px;color:#dadada;font-family:'Liberation Mono',monospace;letter-spacing:0.16px;white-space:pre;">  --tabbar-item-margin-bottom: <span style="color:#f07670">0px</span></div>
<div class="a" style="left:844px;top:259.50px;font-size:18px;line-height:22px;color:#ffd700;font-family:'Liberation Mono',monospace;letter-spacing:0.16px;">}</div>
<div class="a" style="left:788px;top:371px;width:782px;height:230px;background:#242424;box-shadow:0 0 6px 3px rgba(40,110,190,.55);"></div>
<div class="a" style="left:788px;top:371px;width:782px;height:13px;background:#292a2d;"></div>
<div class="a" style="left:829px;top:371px;width:54px;height:13px;background:#000;"></div>
<div class="a" style="left:1146px;top:371px;width:88px;height:13px;background:#202124;"></div>
<div class="a" style="left:788px;top:384px;width:782px;height:1px;background:#3d3d3d;"></div>
<div class="a" style="left:788px;top:371px;width:782px;height:13px;overflow:hidden">
<div class="a" style="left:54px;top:-6px;font-size:12px;line-height:14px;color:#e6e6e6">Wxml</div>
<div class="a" style="left:106px;top:-6px;font-size:12px;line-height:14px;color:#e6e6e6">Console</div>
<div class="a" style="left:171px;top:-6px;font-size:12px;line-height:14px;color:#e6e6e6">Sources</div>
<div class="a" style="left:234px;top:-6px;font-size:12px;line-height:14px;color:#e6e6e6">AppData</div>
<div class="a" style="left:302.5px;top:-6px;font-size:12px;line-height:14px;color:#e6e6e6">Network</div>
<div class="a" style="left:370px;top:-6px;font-size:12px;line-height:14px;color:#e6e6e6">Performance</div>
<div class="a" style="left:458px;top:-6px;font-size:12px;line-height:14px;color:#e6e6e6">Memory</div>
<div class="a" style="left:524.5px;top:-6px;font-size:12px;line-height:14px;color:#e6e6e6">Storage</div>
<div class="a" style="left:587px;top:-6px;font-size:12px;line-height:14px;color:#e6e6e6">Security</div>
<div class="a" style="left:660px;top:-6px;font-size:12px;line-height:14px;color:#e6e6e6">Sensor</div>
<div class="a" style="left:715px;top:-6px;font-size:12px;line-height:14px;color:#e6e6e6">»</div>
<svg class="a" style="left:767px;top:0px" width="11" height="6"><path d="M2.3 0H8.7L10.5 4.4Q10.6 5 10 5H1Q.4 5 .5 4.4Z" fill="#f4b400"/><path d="M5.5 0V2.6" stroke="#fff" stroke-width="1"/></svg>
<svg class="a" style="left:9px;top:-4px" width="14" height="14"><path d="M1 0V9H5" fill="none" stroke="#8a8a8a" stroke-width="1.2"/><path d="M6 4L13 7.5L10 8.5L12.5 11.5L11.3 12.6L8.8 9.6L7.3 12Z" fill="#8a8a8a"/></svg>
<div class="a" style="left:35px;top:0px;width:1px;height:10px;background:#444;"></div>
</div>
<div class="a" style="left:788px;top:449px;width:576px;height:66px;background:#282828;"></div>
<div class="a" style="left:788px;top:449px;width:44px;height:66px;background:#222;"></div>
<div class="a" style="left:788px;top:433px;width:576px;height:16px;background:#073b69;"></div>
<div class="a" style="left:819px;top:431px;width:510px;height:19px;background:transparent;border:1.5px solid #e0202a;"></div>
<div class="a" style="left:844px;top:449px;width:1px;height:66px;background:#34506a;"></div>
<div class="a m" style="left:796px;top:433px;font-size:10px;line-height:12px;color:#b9c7d6">···</div>
<div class="a m" style="left:817px;top:384.00px;font-size:10.8px;line-height:16px;white-space:pre;"><span class="tg">item&gt;</span></div>
<svg class="a" style="left:817px;top:405.5px" width="8" height="6"><path d="M0 0H8L4 6Z" fill="#9e9e9e"/></svg>
<div class="a m" style="left:826px;top:400.60px;font-size:10.8px;line-height:16px;white-space:pre;"><span class="tg">&lt;van-tabbar-item </span><span class="an">is</span><span class="tg">="</span><span class="av">miniprogram_npm/@vant/weapp/tabbar-item/index</span><span class="tg">"&gt;</span></div>
<svg class="a" style="left:829px;top:421.5px" width="8" height="6"><path d="M0 0H8L4 6Z" fill="#9e9e9e"/></svg>
<div class="a m" style="left:838px;top:416.50px;font-size:10.8px;line-height:16px;white-space:pre;"><span class="tx">#shadow-root</span></div>
<svg class="a" style="left:840px;top:438px" width="8" height="6"><path d="M0 0H8L4 6Z" fill="#9e9e9e"/></svg>
<div class="a m" style="left:850px;top:433.00px;font-size:10.8px;line-height:16px;white-space:pre;"><span class="tg">&lt;view </span><span class="an">bind:tap</span><span class="tg">="</span><span class="av">onClick</span><span class="tg">" </span><span class="an">class</span><span class="tg">="</span><span class="av">van-tabbar-item</span><span class="tg">" </span><span class="an">style</span><span class="tg">="</span><span class="av">color: </span><span class="tg">"&gt;</span></div>
<svg class="a" style="left:853px;top:454px" width="6" height="8"><path d="M0 0L6 4L0 8Z" fill="#9e9e9e"/></svg>
<div class="a m" style="left:862px;top:450.00px;font-size:10.8px;line-height:16px;white-space:pre;"><span class="tg">&lt;view </span><span class="an">class</span><span class="tg">="</span><span class="av">van-tabbar-item__icon</span><span class="tg">"&gt;</span><span class="tx">…</span><span class="tg">&lt;/view&gt;</span></div>
<div class="a m" style="left:862px;top:467.60px;font-size:10.8px;line-height:16px;white-space:pre;"><span class="tg">&lt;view </span><span class="an">class</span><span class="tg">="</span><span class="av">van-tabbar-item__text</span><span class="tg">"&gt;</span><span class="tx">联系我们</span></div>
<div class="a m" style="left:888px;top:483.00px;font-size:10.8px;line-height:16px;white-space:pre;"><span class="tg">&lt;/view&gt;</span></div>
<div class="a m" style="left:850.5px;top:499.70px;font-size:10.8px;line-height:16px;white-space:pre;"><span class="tg">&lt;/view&gt;</span></div>
<div class="a m" style="left:839px;top:516.00px;font-size:10.8px;line-height:16px;white-space:pre;"><span class="tg">&lt;image </span><span class="an">mode</span><span class="tg">="</span><span class="av">aspectFit</span><span class="tg">" </span><span class="an">src</span><span class="tg">="</span><span class="av">/images/tabs/contact.png</span><span class="tg">" </span><span class="an">style</span><span class="tg">="</span><span class="av">width: 30px;</span></div>
<div class="a m" style="left:839px;top:532.00px;font-size:10.8px;line-height:16px;white-space:pre;"><span class="av">height: 30px;</span><span class="tg">" </span><span class="an">role</span><span class="tg">="</span><span class="av">img</span><span class="tg">"&gt;&lt;/image&gt;</span></div>
<div class="a" style="left:788px;top:548px;width:576px;height:10px;overflow:hidden">
<div class="a m" style="left:39px;top:0.00px;font-size:10.8px;line-height:16px;white-space:pre;"><span class="tg">&lt;/van-tabbar-item&gt;</span></div>
</div>
<div class="a" style="left:1364px;top:385px;width:13px;height:173px;background:#262626;"></div>
<div class="a" style="left:1364px;top:477px;width:12px;height:65px;background:#3a3a3a;border-radius:2px;"></div>
<div class="a" style="left:788px;top:558px;width:576px;height:22px;background:#2b2b2b;"></div>
<div class="a" style="left:788px;top:558px;width:782px;height:1px;background:#3d3d3d;"></div>
<div class="a" style="left:1097px;top:559px;width:124px;height:21px;background:#333;"></div>
<div class="a" style="left:796px;top:563.50px;font-size:11.5px;line-height:14px;color:#6aaedc;">tab-bar</div>
<div class="a" style="left:849px;top:563.50px;font-size:11.5px;line-height:14px;color:#6aaedc;">van-tabbar</div>
<div class="a" style="left:919px;top:563.50px;font-size:11.5px;line-height:14px;color:#6aaedc;">van-tabbar-item</div>
<div class="a" style="left:1017px;top:563.50px;font-size:11.5px;line-height:14px;color:#6aaedc;">#shadow-root</div>
<div class="a" style="left:1104px;top:563.50px;font-size:11.5px;line-height:14px;color:#6aaedc;">view.van-tabbar-item</div>
<div class="a" style="left:788px;top:580px;width:782px;height:21px;background:#383838;"></div>
<div class="a" style="left:1422px;top:587.50px;font-size:11.3px;line-height:14px;color:#8a8a8a;">行 5，列 2</div>
<div class="a" style="left:1492px;top:587.50px;font-size:11.3px;line-height:14px;color:#8a8a8a;">制表符长度: 2</div>
<div class="a" style="left:0;top:0;width:1570px;height:601px;overflow:hidden">
<div class="a" style="left:1377px;top:385px;width:193px;height:195px;background:#242424;"></div>
<div class="a" style="left:1377px;top:385px;width:1px;height:195px;background:#3d3d3d;"></div>
<div class="a" style="left:1378px;top:385px;width:192px;height:25px;background:#292a2d;"></div>
<div class="a" style="left:1378px;top:385px;width:49px;height:25px;background:#000;"></div>
<div class="a" style="left:1386px;top:390.50px;font-size:12px;line-height:14px;color:#f0f0f0;">Styles</div>
<div class="a" style="left:1436px;top:390.50px;font-size:12px;line-height:14px;color:#d6d6d6;">Computed</div>
<div class="a" style="left:1510px;top:390.50px;font-size:12px;line-height:14px;color:#d6d6d6;">Dataset</div>
<div class="a" style="left:1568px;top:390.50px;font-size:12px;line-height:14px;color:#d6d6d6;">Component Data</div>
<div class="a" style="left:1378px;top:410px;width:192px;height:1px;background:#3d3d3d;"></div>
<div class="a" style="left:1380px;top:414px;width:190px;height:21px;background:#1f1f1f;"></div>
<div class="a" style="left:1385px;top:417.50px;font-size:11.5px;line-height:14px;color:#8a8a8a;">Filter</div>
<div class="a" style="left:1378px;top:488px;width:192px;height:1px;background:#3d3d3d;"></div>
<div class="a m" style="left:1382px;top:440.00px;font-size:10.8px;line-height:14px;white-space:pre;"><span class="pv">element.style </span><span class="tx">{</span></div>
<div class="a m" style="left:1399px;top:455.60px;font-size:10.8px;line-height:14px;white-space:pre;"><span class="pn">color</span><span class="pv">: ;</span></div>
<div class="a m" style="left:1382px;top:469.60px;font-size:10.8px;line-height:14px;white-space:pre;"><span class="pv">}</span></div>
<div class="a m" style="left:1383px;top:491.00px;font-size:10.8px;line-height:14px;white-space:pre;"><span class="pv">.van-tabbar-item </span><span class="tx">{</span></div>
<div class="a m" style="left:1399px;top:506.60px;font-size:10.8px;line-height:14px;white-space:pre;"><span class="st"><span class="pn">display</span><span class="pv">: -webkit-flex;</span></span></div>
<div class="a m" style="left:1399px;top:521.50px;font-size:10.8px;line-height:14px;white-space:pre;"><span class="pn">display</span><span class="pv">: flex;</span></div>
<div class="a m" style="left:1399px;top:535.50px;font-size:10.8px;line-height:14px;white-space:pre;"><span class="st"><span class="pn">-webkit-flex-direction</span><span class="pv">: column;</span></span></div>
<div class="a m" style="left:1399px;top:549.60px;font-size:10.8px;line-height:14px;white-space:pre;"><span class="pn">flex-direction</span><span class="pv">: column;</span></div>
<div class="a m" style="left:1399px;top:564.00px;font-size:10.8px;line-height:14px;white-space:pre;"><span class="st"><span class="pn">-webkit-align-items</span><span class="pv">: center;</span></span></div>
</div>
<div class="a" style="left:739px;top:634px;width:1123px;height:296px;background:#2b2b2b;"></div>
<div class="a" style="left:739px;top:634px;width:1123px;height:1px;background:#3b3b3b;"></div>
<div class="a" style="left:739px;top:635px;width:1123px;height:36px;background:#313131;"></div>
<div class="a" style="left:764px;top:644.00px;font-size:14px;line-height:18px;color:#e0e0e0;">调试器</div>
<div class="a" style="left:815px;top:642px;width:23px;height:23px;background:#4a4a4a;border-radius:50%;"></div>
<div class="a" style="left:822px;top:644.50px;font-size:14px;line-height:18px;color:#e0e0e0;">3</div>
<div class="a" style="left:764px;top:669px;width:41px;height:2px;background:#e8e8e8;"></div>
<div class="a" style="left:863px;top:644.00px;font-size:14px;line-height:18px;color:#9a9a9a;">输出</div>
<div class="a" style="left:915px;top:644.00px;font-size:14px;line-height:18px;color:#9a9a9a;">终端</div>
<div class="a" style="left:968px;top:644.00px;font-size:14px;line-height:18px;color:#9a9a9a;">代码质量</div>
<div class="a" style="left:1048px;top:644.00px;font-size:14px;line-height:18px;color:#9a9a9a;">问题</div>
<svg class="a" style="left:1816px;top:651px" width="14" height="9"><path d="M1 8L7 2L13 8" fill="none" stroke="#d0d0d0" stroke-width="1.5"/></svg>
<svg class="a" style="left:1856px;top:650px" width="12" height="12"><path d="M1 1L11 11M11 1L1 11" stroke="#d0d0d0" stroke-width="1.5"/></svg>
<div class="a" style="left:739px;top:671px;width:1123px;height:33px;background:#292a2d;"></div>
<div class="a" style="left:739px;top:704px;width:1123px;height:1px;background:#3c3c3c;"></div>
<svg class="a" style="left:751px;top:679px" width="18" height="17" viewBox="0 0 18 17" fill="none" stroke="#1a8cdd" stroke-width="1.6"><path d="M7 15.5H2A1.2 1.2 0 0 1 .8 14.3V2A1.2 1.2 0 0 1 2 .8H14.3A1.2 1.2 0 0 1 15.5 2V6.5"/><path d="M8 8L17 11.3L13.2 12.6L16.3 15.7L15.2 16.8L12.1 13.7L10.8 17.2Z" fill="#1a8cdd" stroke="none"/></svg>
<div class="a" style="left:782px;top:677px;width:1px;height:20px;background:#444;"></div>
<div class="a" style="left:790px;top:671px;width:68px;height:33px;background:#000;"></div>
<div class="a" style="left:805px;top:678.50px;font-size:14.3px;line-height:18px;color:#ececec;letter-spacing:0px;">Wxml</div>
<div class="a" style="left:872.5px;top:678.50px;font-size:14.3px;line-height:18px;color:#ececec;letter-spacing:0px;">Console</div>
<div class="a" style="left:955px;top:678.50px;font-size:14.3px;line-height:18px;color:#ececec;letter-spacing:0px;">Sources</div>
<div class="a" style="left:1036px;top:678.50px;font-size:14.3px;line-height:18px;color:#ececec;letter-spacing:0px;">AppData</div>
<div class="a" style="left:1123.5px;top:678.50px;font-size:14.3px;line-height:18px;color:#ececec;letter-spacing:0.55px;">Network</div>
<div class="a" style="left:1210px;top:678.50px;font-size:14.3px;line-height:18px;color:#ececec;letter-spacing:0px;">Performance</div>
<div class="a" style="left:1322.5px;top:678.50px;font-size:14.3px;line-height:18px;color:#ececec;letter-spacing:0.5px;">Memory</div>
<div class="a" style="left:1407px;top:678.50px;font-size:14.3px;line-height:18px;color:#ececec;letter-spacing:0px;">Storage</div>
<div class="a" style="left:1487px;top:678.50px;font-size:14.3px;line-height:18px;color:#ececec;letter-spacing:0px;">Security</div>
<div class="a" style="left:1581px;top:678.50px;font-size:14.3px;line-height:18px;color:#ececec;letter-spacing:0px;">Sensor</div>
<svg class="a" style="left:1651px;top:682px" width="12" height="11"><path d="M1 1L5.5 5.5L1 10M6.5 1L11 5.5L6.5 10" fill="none" stroke="#cfcfcf" stroke-width="1.3"/></svg>
<svg class="a" style="left:1718px;top:679px" width="14" height="13"><path d="M7 .5L13.5 12.5H.5Z" fill="#f4b400"/><path d="M7 4.5V8.5" stroke="#292a2d" stroke-width="1.6"/><circle cx="7" cy="10.4" r=".9" fill="#292a2d"/></svg>
<div class="a" style="left:1736px;top:678.50px;font-size:14.3px;line-height:18px;color:#ececec;">3</div>
<svg class="a" style="left:1749px;top:680px" width="13" height="12"><path d="M1.5 0H11.5A1.5 1.5 0 0 1 13 1.5V7.5A1.5 1.5 0 0 1 11.5 9H4L1 12V1.5A1.5 1.5 0 0 1 1.5 0Z" fill="#3b82f6"/><path d="M3.5 3.2H9.5M3.5 5.8H7.5" stroke="#fff" stroke-width="1.1"/></svg>
<div class="a" style="left:1768px;top:678.50px;font-size:14.3px;line-height:18px;color:#ececec;">1</div>
<div class="a" style="left:1783px;top:677px;width:1px;height:21px;background:#4a4a4a;"></div>
<svg class="a" style="left:1797px;top:678px" width="18" height="18" viewBox="0 0 24 24"><path fill="#9aa0a6" d="M19.4 13c.04-.33.06-.66.06-1s-.02-.67-.06-1l2.1-1.65c.19-.15.24-.42.12-.64l-2-3.46c-.12-.22-.39-.3-.61-.22l-2.49 1c-.52-.4-1.08-.73-1.69-.98l-.38-2.65A.49.49 0 0 0 14 2h-4c-.25 0-.46.18-.49.42l-.38 2.65c-.61.25-1.17.59-1.69.98l-2.49-1c-.23-.09-.49 0-.61.22l-2 3.46c-.13.22-.07.49.12.64L4.57 11c-.04.33-.07.67-.07 1s.03.67.07 1l-2.11 1.65c-.19.15-.24.42-.12.64l2 3.46c.12.22.39.3.61.22l2.49-1c.52.4 1.08.73 1.69.98l.38 2.65c.03.24.24.42.49.42h4c.25 0 .46-.18.49-.42l.38-2.65c.61-.25 1.17-.59 1.69-.98l2.49 1c.23.09.49 0 .61-.22l2-3.46c.12-.22.07-.49-.12-.64L19.4 13zM12 15.5c-1.93 0-3.5-1.57-3.5-3.5s1.57-3.5 3.5-3.5 3.5 1.57 3.5 3.5-1.57 3.5-3.5 3.5z"/></svg>
<svg class="a" style="left:1840px;top:679px" width="4" height="17"><circle cx="2" cy="2" r="1.7" fill="#9aa0a6"/><circle cx="2" cy="8.5" r="1.7" fill="#9aa0a6"/><circle cx="2" cy="15" r="1.7" fill="#9aa0a6"/></svg>
<div class="a" style="left:739px;top:705px;width:734px;height:225px;background:#242424;"></div>
<div class="a m" style="left:756px;top:710.50px;font-size:13.7px;line-height:20px;white-space:pre;"><span class="tg">&lt;page&gt;</span></div>
<div class="a m" style="left:772px;top:731.30px;font-size:13.7px;line-height:20px;white-space:pre;"><span class="tg">&lt;view&gt;</span><span class="tx">1 + 2  = 3</span><span class="tg">&lt;/view&gt;</span></div>
<svg class="a" style="left:760px;top:755px" width="7" height="9"><path d="M0 0L7 4.5L0 9Z" fill="#9e9e9e"/></svg>
<div class="a m" style="left:771px;top:752.20px;font-size:13.7px;line-height:20px;white-space:pre;"><span class="tg">&lt;van-button </span><span class="an">is</span><span class="tg">="</span><span class="av">miniprogram_npm/@vant/weapp/button/index</span><span class="tg">" </span><span class="an">bindtap</span><span class="tg">="</span><span class="av">add</span><span class="tg">" </span><span class="an">data-step</span><span class="tg">=</span></div>
<div class="a m" style="left:758.5px;top:772.40px;font-size:13.7px;line-height:20px;white-space:pre;"><span class="tg">"</span><span class="av">1</span><span class="tg">"&gt;</span><span class="tx">…</span><span class="tg">&lt;/van-button&gt;</span></div>
<svg class="a" style="left:760px;top:796px" width="7" height="9"><path d="M0 0L7 4.5L0 9Z" fill="#9e9e9e"/></svg>
<div class="a m" style="left:771px;top:793.40px;font-size:13.7px;line-height:20px;white-space:pre;"><span class="tg">&lt;van-button </span><span class="an">is</span><span class="tg">="</span><span class="av">miniprogram_npm/@vant/weapp/button/index</span><span class="tg">" </span><span class="an">bindtap</span><span class="tg">="</span><span class="av">add</span><span class="tg">" </span><span class="an">data-step</span><span class="tg">=</span></div>
<div class="a m" style="left:758.5px;top:813.20px;font-size:13.7px;line-height:20px;white-space:pre;"><span class="tg">"</span><span class="av">-1</span><span class="tg">"&gt;</span><span class="tx">…</span><span class="tg">&lt;/van-button&gt;</span></div>
<div class="a m" style="left:772px;top:835.20px;font-size:13.7px;line-height:20px;white-space:pre;"><span class="tg">&lt;view&gt;</span><span class="tx">---------------</span><span class="tg">&lt;/view&gt;</span></div>
<svg class="a" style="left:760px;top:859px" width="7" height="9"><path d="M0 0L7 4.5L0 9Z" fill="#9e9e9e"/></svg>
<div class="a m" style="left:771px;top:856.00px;font-size:13.7px;line-height:20px;white-space:pre;"><span class="tg">&lt;test </span><span class="an">is</span><span class="tg">="</span><span class="av">componnets/test/test</span><span class="tg">"&gt;</span><span class="tx">…</span><span class="tg">&lt;/test&gt;</span></div>
<div class="a m" style="left:756px;top:877.40px;font-size:13.7px;line-height:20px;white-space:pre;"><span class="tg">&lt;/page&gt;</span></div>
<div class="a m" style="left:756px;top:898.40px;font-size:13.7px;line-height:20px;white-space:pre;"><span class="tg">&lt;tab-bar&gt;</span></div>
<div class="a" style="left:739px;top:922px;width:734px;height:3px;overflow:hidden">
<svg class="a" style="left:21px;top:1px" width="7" height="9"><path d="M0 0L7 4.5L0 9Z" fill="#9e9e9e"/></svg>
<div class="a m" style="left:32px;top:-3.00px;font-size:13.7px;line-height:20px;white-space:pre;"><span class="tg">&lt;van-tabbar </span><span class="an">is</span><span class="tg">="</span><span class="av">miniprogram_npm/@vant/weapp/tabbar/index</span><span class="tg">" </span><span class="an">bind:change</span><span class="tg">="</span><span class="av">onChange</span><span class="tg">"</span></div>
</div>
<div class="a" style="left:739px;top:925px;width:734px;height:5px;background:#2b2b2b;"></div>
<div class="a" style="left:739px;top:925px;width:734px;height:1px;background:#3c3c3c;"></div>
<div class="a" style="left:1473px;top:705px;width:17px;height:225px;background:#2b2b2b;"></div>
<div class="a" style="left:1475px;top:706px;width:13px;height:98px;background:#3c3c3c;border-radius:2px;"></div>
<div class="a" style="left:1490px;top:705px;width:372px;height:225px;background:#242424;"></div>
<div class="a" style="left:1490px;top:705px;width:1px;height:225px;background:#3c3c3c;"></div>
<div class="a" style="left:1491px;top:705px;width:371px;height:32px;background:#292a2d;"></div>
<div class="a" style="left:1491px;top:705px;width:63px;height:32px;background:#000;"></div>
<div class="a" style="left:1503px;top:712.50px;font-size:15px;line-height:18px;color:#f5f5f5;">Styles</div>
<div class="a" style="left:1566px;top:712.50px;font-size:15px;line-height:18px;color:#e0e0e0;">Computed</div>
<div class="a" style="left:1660.5px;top:712.50px;font-size:15px;line-height:18px;color:#e0e0e0;letter-spacing:-0.3px;">Dataset</div>
<div class="a" style="left:1736px;top:712.50px;font-size:14.9px;line-height:18px;color:#e0e0e0;">Component Data</div>
<div class="a" style="left:1491px;top:737px;width:371px;height:1px;background:#3c3c3c;"></div>
<div class="a" style="left:1495px;top:742px;width:260px;height:25px;background:#1d1d1d;"></div>
<div class="a" style="left:1500px;top:746.00px;font-size:15px;line-height:18px;color:#8a8a8a;">Filter</div>
<div class="a m" style="left:1769px;top:746.00px;font-size:13.6px;line-height:18px;white-space:pre;color:#e0e0e0;"><b>.cls</b></div>
<svg class="a" style="left:1817px;top:747px" width="22" height="22"><path d="M7 0V14M0 7H14" stroke="#cfcfcf" stroke-width="1.6"/><path d="M21 14V21H15Z" fill="#9a9a9a"/></svg>
<svg class="a" style="left:1849px;top:747px" width="16" height="17"><rect x=".7" y=".7" width="15" height="15.6" fill="none" stroke="#9a9a9a" stroke-width="1.3"/><path d="M9 4.5V12L4 8.2Z" fill="#9a9a9a"/></svg>
<div class="a" style="left:1491px;top:771px;width:371px;height:1px;background:#2f2f2f;"></div>
<div class="a m" style="left:1496px;top:775.80px;font-size:13.7px;line-height:18px;white-space:pre;"><span class="pv">element.style </span><span class="tx">{</span></div>
<div class="a m" style="left:1519px;top:795.80px;font-size:13.7px;line-height:18px;white-space:pre;"><span class="pn">color</span><span class="pv">: ;</span></div>
<div class="a m" style="left:1496px;top:814.00px;font-size:13.7px;line-height:18px;white-space:pre;"><span class="pv">}</span></div>
<div class="a" style="left:1491px;top:837px;width:371px;height:1px;background:#3c3c3c;"></div>
<div class="a m" style="left:1496px;top:840.50px;font-size:13.7px;line-height:18px;white-space:pre;"><span class="pv">.van-tabbar-item </span><span class="tx">{</span></div>
<div class="a m" style="left:1778px;top:840.50px;font-size:13.7px;line-height:18px;white-space:pre;color:#e0e0e0;"><span style="text-decoration:underline">index.wxss</span></div>
<div class="a m" style="left:1519px;top:861.50px;font-size:13.7px;line-height:18px;white-space:pre;"><span class="st"><span class="pn">display</span><span class="pv">: -webkit-flex;</span></span></div>
<div class="a m" style="left:1519px;top:879.40px;font-size:13.7px;line-height:18px;white-space:pre;"><span class="pn">display</span><span class="pv">: flex;</span></div>
<div class="a m" style="left:1519px;top:897.00px;font-size:13.7px;line-height:18px;white-space:pre;"><span class="st"><span class="pn">-webkit-flex-direction</span><span class="pv">: column;</span></span></div>
<div class="a m" style="left:1519px;top:915.00px;font-size:13.7px;line-height:18px;white-space:pre;"><span class="pn">flex-direction</span><span class="pv">: column;</span></div>
<svg class="a" style="left:0;top:0" width="1862" height="930" viewBox="0 0 1862 930">
<path d="M973.3 208L986 221.8L980.7 222.3L1019.9 353.6L1018.4 353.6L975.4 224.2L970.9 224.8Z" fill="#ed1c24"/>
<path d="M1197.80 242.58L418.29 781.05L420.4 784.4L402 787.8L411.7 771.6L414.11 774.95L1197.00 241.42Z" fill="#ed1c24"/>
</svg>
<div class="a" style="left:1654px;top:898.00px;font-size:19.2px;line-height:24px;color:rgba(255,255,255,.72);">CSDN @计算机魔术师</div>
</body></html>
